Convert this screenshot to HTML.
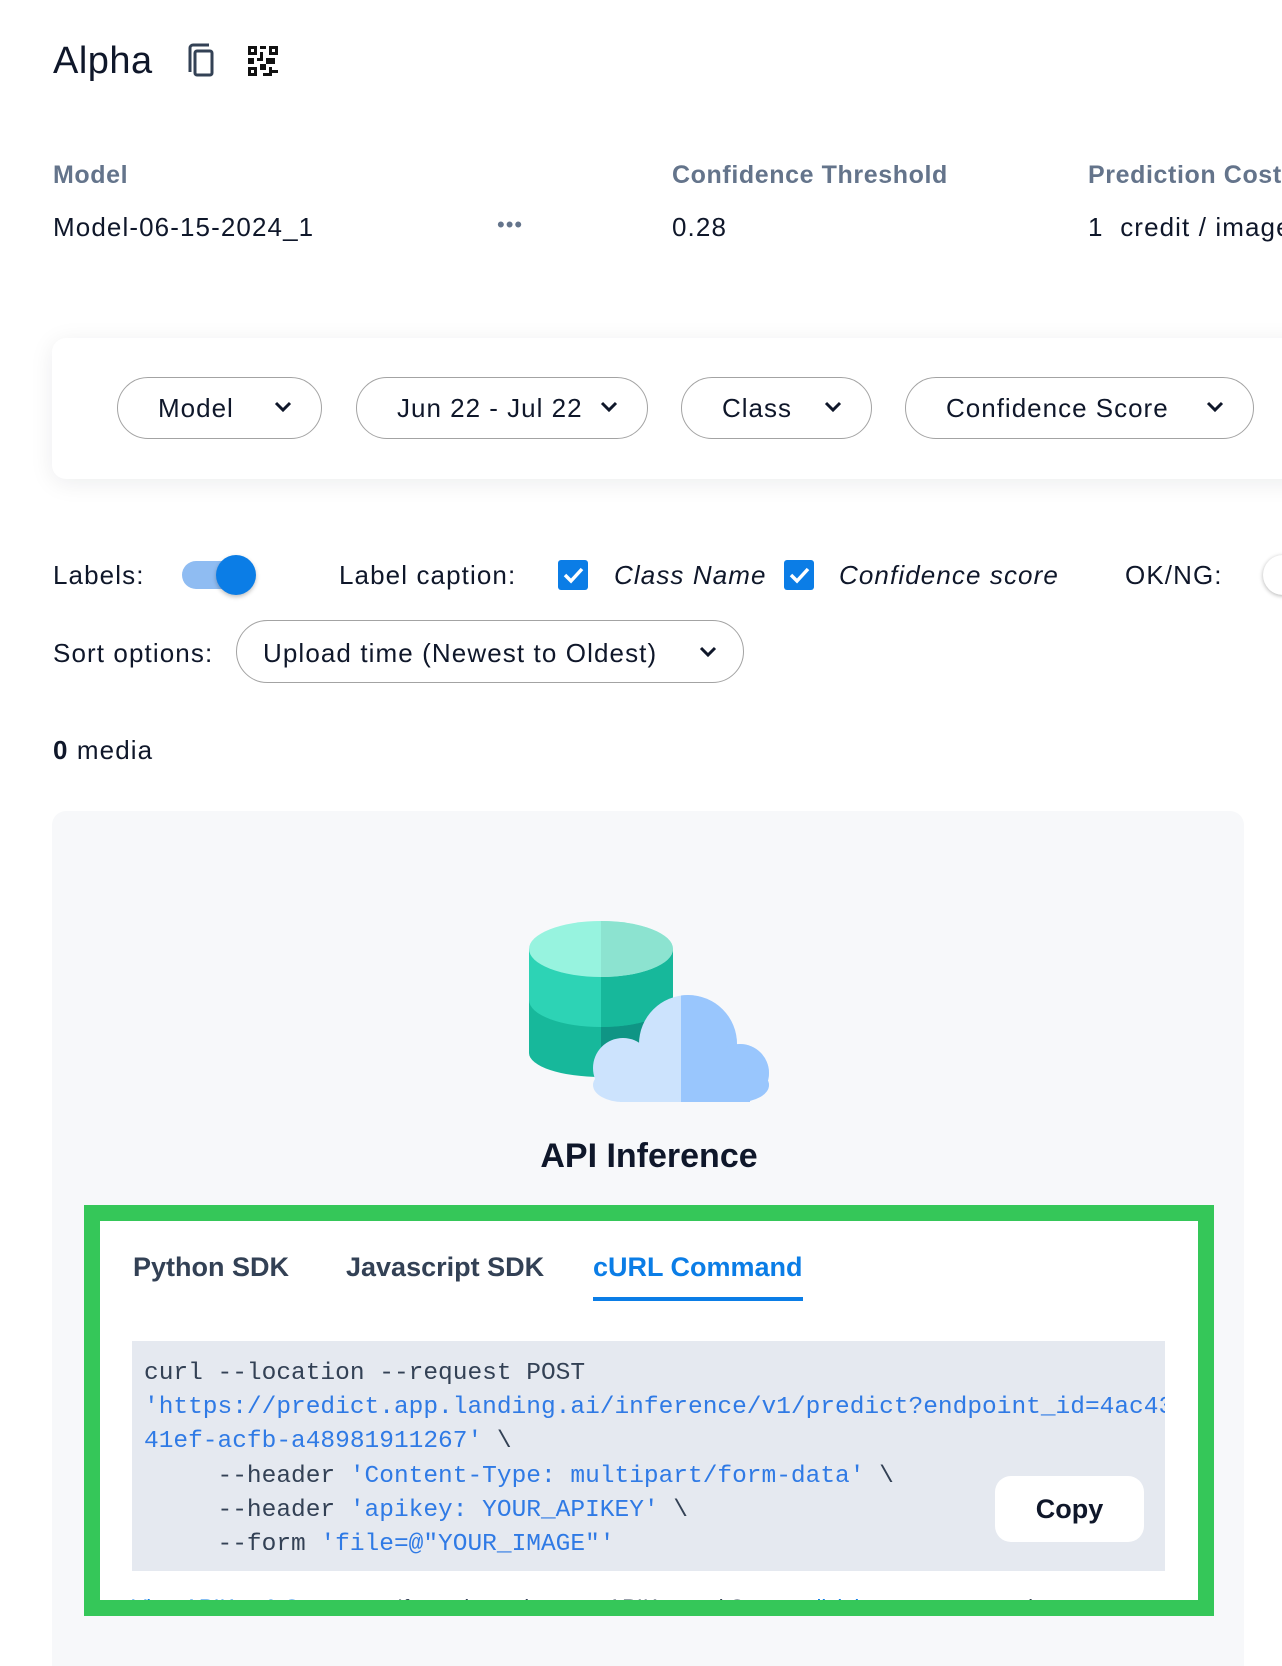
<!DOCTYPE html>
<html><head><meta charset="utf-8"><style>
*{box-sizing:border-box;margin:0;padding:0}
html,body{width:1282px;height:1666px;overflow:hidden;background:#fff}
body{position:relative;font-family:"Liberation Sans",sans-serif;color:#0f172a}
.a{position:absolute;white-space:nowrap}
.lbl{font-size:25px;font-weight:bold;color:#64748b;letter-spacing:0.6px}
.val{font-size:26px;color:#0f172a;letter-spacing:1.1px}
.pill{position:absolute;border:1.5px solid #a3a3a3;border-radius:32px;height:62px;top:377px;font-size:26px;letter-spacing:1px;display:flex;align-items:center;padding-left:40px;color:#0f172a}
.chev{position:absolute;right:28px;top:22px}
.cb{position:absolute;width:30px;height:30px;background:#0b7de6;border-radius:3px;top:560px}
.mono{font-family:"Liberation Mono","DejaVu Sans Mono",monospace;font-size:24.5px;color:#334155}
.s{color:#2f7ae5}
.tab{position:absolute;top:1252px;font-size:27px;font-weight:bold;color:#334155}
</style></head><body>

<div class="a" style="left:53px;top:40px;font-size:38px;color:#0f172a;letter-spacing:0.5px">Alpha</div>
<svg class="a" style="left:186px;top:42px" width="34" height="36" viewBox="0 0 34 36"><path d="M4 30V6a3 3 0 0 1 3-3h16" fill="none" stroke="#334155" stroke-width="3"/><rect x="9" y="9" width="17" height="24" rx="2" fill="none" stroke="#334155" stroke-width="3"/></svg>
<svg class="a" style="left:248px;top:46px" width="30" height="30" viewBox="0 0 10 10" shape-rendering="crispEdges"><g fill="#111"><rect x="0" y="0" width="3" height="3"/><rect x="7" y="0" width="3" height="3"/><rect x="0" y="7" width="3" height="3"/><rect x="4" y="0" width="2" height="1"/><rect x="4" y="2" width="1" height="2"/><rect x="0" y="4" width="2" height="2"/><rect x="3" y="4" width="2" height="1"/><rect x="6" y="4" width="3" height="2"/><rect x="4" y="6" width="2" height="2"/><rect x="7" y="7" width="1" height="3"/><rect x="8" y="8" width="2" height="1"/><rect x="5" y="9" width="2" height="1"/></g><g fill="#fff"><rect x="1" y="1" width="1" height="1"/><rect x="8" y="1" width="1" height="1"/><rect x="1" y="8" width="1" height="1"/></g></svg>

<div class="a lbl" style="left:53px;top:161px">Model</div>
<div class="a val" style="left:53px;top:212px">Model-06-15-2024_1</div>
<div class="a" style="left:497px;top:212px;font-size:22px;color:#64748b;letter-spacing:1px">•••</div>
<div class="a lbl" style="left:672px;top:161px">Confidence Threshold</div>
<div class="a val" style="left:672px;top:212px">0.28</div>
<div class="a lbl" style="left:1088px;top:161px">Prediction Cost</div>
<div class="a val" style="left:1088px;top:212px">1&nbsp; credit / image</div>

<div class="a" style="left:52px;top:338px;width:1300px;height:141px;background:#fff;border-radius:14px;box-shadow:0 4px 24px rgba(15,23,42,0.08)"></div>
<div class="pill" style="left:117px;width:205px">Model<svg class="chev" width="20" height="14" viewBox="0 0 20 14"><path d="M3 3l7 7 7-7" fill="none" stroke="#0f172a" stroke-width="3"/></svg></div>
<div class="pill" style="left:356px;width:292px">Jun 22 - Jul 22<svg class="chev" width="20" height="14" viewBox="0 0 20 14"><path d="M3 3l7 7 7-7" fill="none" stroke="#0f172a" stroke-width="3"/></svg></div>
<div class="pill" style="left:681px;width:191px">Class<svg class="chev" width="20" height="14" viewBox="0 0 20 14"><path d="M3 3l7 7 7-7" fill="none" stroke="#0f172a" stroke-width="3"/></svg></div>
<div class="pill" style="left:905px;width:349px">Confidence Score<svg class="chev" width="20" height="14" viewBox="0 0 20 14"><path d="M3 3l7 7 7-7" fill="none" stroke="#0f172a" stroke-width="3"/></svg></div>

<div class="a val" style="left:53px;top:560px">Labels:</div>
<div class="a" style="left:182px;top:561px;width:66px;height:28px;border-radius:14px;background:#8fbcf2"></div>
<div class="a" style="left:216px;top:555px;width:40px;height:40px;border-radius:50%;background:#0b7de6;box-shadow:0 2px 4px rgba(0,0,0,0.25)"></div>
<div class="a val" style="left:339px;top:560px">Label caption:</div>
<div class="cb" style="left:558px"><svg width="30" height="30" viewBox="0 0 30 30"><path d="M7 15l6 6 11-12" fill="none" stroke="#fff" stroke-width="3.5"/></svg></div>
<div class="a val" style="left:614px;top:560px;font-style:italic">Class Name</div>
<div class="cb" style="left:784px"><svg width="30" height="30" viewBox="0 0 30 30"><path d="M7 15l6 6 11-12" fill="none" stroke="#fff" stroke-width="3.5"/></svg></div>
<div class="a val" style="left:839px;top:560px;font-style:italic">Confidence score</div>
<div class="a val" style="left:1125px;top:560px">OK/NG:</div>
<div class="a" style="left:1263px;top:555px;width:40px;height:40px;border-radius:50%;background:#fff;box-shadow:0 1px 4px rgba(0,0,0,0.3)"></div>

<div class="a val" style="left:53px;top:638px">Sort options:</div>
<div class="a" style="left:236px;top:620px;width:508px;height:63px;border:1.5px solid #a3a3a3;border-radius:32px"></div>
<div class="a val" style="left:263px;top:638px">Upload time (Newest to Oldest)</div>
<svg class="a" style="left:698px;top:645px" width="20" height="14" viewBox="0 0 20 14"><path d="M3 3l7 7 7-7" fill="none" stroke="#0f172a" stroke-width="3"/></svg>

<div class="a val" style="left:53px;top:735px"><b>0</b> media</div>

<div class="a" style="left:52px;top:811px;width:1192px;height:900px;background:#f7f8fa;border-radius:14px"></div>

<svg class="a" style="left:0;top:0" width="1282" height="1666" viewBox="0 0 1282 1666">
<path d="M529 949V1053A72 24 0 0 0 673 1053V949Z" fill="#17b89b"/>
<path d="M529 949V1000A72 27 0 0 0 601 1027V949Z" fill="#2dd3b5"/>
<path d="M601 1027A72 27 0 0 0 673 1000V1053A72 24 0 0 1 601 1077Z" fill="#0f9585"/>
<path d="M601 949V1027A72 27 0 0 0 673 1000V949Z" fill="#17b89b"/>
<ellipse cx="601" cy="949" rx="72" ry="28" fill="#97f3df"/>
<path d="M601 921A72 28 0 0 1 601 977Z" fill="#8ce3d0"/>
<clipPath id="b"><rect x="550" y="980" width="240" height="122"/></clipPath>
<g clip-path="url(#b)">
<g fill="#cce3fd">
<circle cx="688" cy="1044" r="49"/><circle cx="623" cy="1068" r="30"/><circle cx="740" cy="1073" r="29"/>
<rect x="593" y="1068" width="176" height="34" rx="30"/><rect x="620" y="1050" width="130" height="52"/>
</g>
<clipPath id="r"><rect x="681" y="980" width="100" height="122"/></clipPath>
<g fill="#99c6fd" clip-path="url(#r)">
<circle cx="688" cy="1044" r="49"/><circle cx="740" cy="1073" r="29"/><rect x="650" y="1050" width="100" height="52"/><rect x="600" y="1068" width="169" height="34" rx="30"/>
</g>
</g>
</svg>

<div class="a" style="left:0;width:1298px;top:1137px;text-align:center;font-size:34px;font-weight:bold;color:#0f172a">API Inference</div>

<div class="a" style="left:84px;top:1205px;width:1130px;height:411px;background:#fff;overflow:hidden">
 <div class="tab" style="left:49px;top:47px">Python SDK</div>
 <div class="tab" style="left:262px;top:47px">Javascript SDK</div>
 <div class="tab" style="left:509px;top:47px;color:#0b7de6">cURL Command</div>
 <div class="a" style="left:509px;top:92px;width:210px;height:4px;background:#0b7de6"></div>
 <div class="a" style="left:48px;top:136px;width:1033px;height:230px;background:#e5e9f0;overflow:hidden">
  <div class="mono" style="position:absolute;left:12px;top:16px;line-height:34.2px;white-space:pre">curl --location --request POST
<span class="s">'https://predict.app.landing.ai/inference/v1/predict?endpoint_id=4ac43</span>
<span class="s">41ef-acfb-a48981911267'</span> \
     --header <span class="s">'Content-Type: multipart/form-data'</span> \
     --header <span class="s">'apikey: YOUR_APIKEY'</span> \
     --form <span class="s">'file=@"YOUR_IMAGE"'</span></div>
  <div class="a" style="left:863px;top:135px;width:149px;height:66px;background:#fff;border-radius:16px;font-size:27px;font-weight:bold;color:#0f172a;text-align:center;line-height:66px">Copy</div>
 </div>
 <div class="a" style="left:48px;top:390px;font-size:22px;color:#334155"><span style="color:#0b7de6;text-decoration:underline">View APIKey &amp; Secret</span> ↗ &nbsp;&nbsp; If you do not have an APIKey and Secret, <span style="color:#0b7de6;text-decoration:underline">click here</span> to generate them</div>
</div>
<div class="a" style="left:84px;top:1205px;width:1130px;height:411px;border:16px solid #35c759"></div>

</body></html>
